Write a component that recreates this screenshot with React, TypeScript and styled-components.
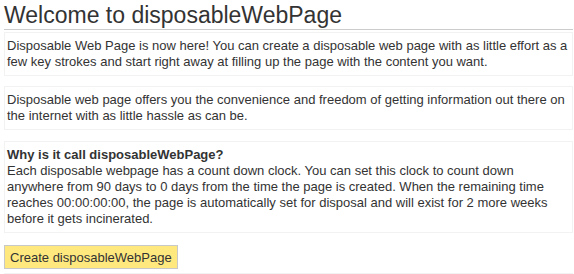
import React from "react";
import styled, { createGlobalStyle } from "styled-components";

const GlobalStyle = createGlobalStyle`
  body {
    margin: 0;
    background: #ffffff;
    font-family: "Liberation Sans", Arial, sans-serif;
    color: #333333;
  }
`;

const Page = styled.div`
  width: 569px;
  padding-left: 4px;
`;

const Title = styled.h1`
  margin: 0;
  padding-top: 1px;
  font-size: 23px;
  font-weight: 400;
  line-height: 28px;
  color: #333333;
  border-bottom: 1px solid #cccccc;
`;

const Section = styled.div<{ $gap?: number }>`
  margin-top: ${(p) => p.$gap ?? 10}px;
  border: 1px solid #f2f2f2;
  padding: 5px 2px;
  font-size: 13px;
  line-height: 16px;
`;

const Text = styled.p`
  margin: 0;
`;

const SubTitle = styled.h3`
  margin: 0;
  font-size: 13px;
  line-height: 16px;
  font-weight: 700;
`;

const CreateBtn = styled.button`
  display: block;
  margin-top: 12px;
  height: 24px;
  padding: 0 5px;
  border: 1px solid #c8c8c8;
  background: #ffe97f;
  font-family: "Liberation Sans", Arial, sans-serif;
  font-size: 13px;
  color: #333333;
  cursor: pointer;
`;

const App = () => {
  return (
    <>
      <GlobalStyle />
      <Page>
        <Title>Welcome to disposableWebPage</Title>
        <Section $gap={2}>
          <Text>
            Disposable Web Page is now here! You can create a disposable web page with as little effort as a
            few key strokes and start right away at filling up the page with the content you want.
          </Text>
        </Section>
        <Section $gap={10}>
          <Text>
            Disposable web page offers you the convenience and freedom of getting information out there on
            the internet with as little hassle as can be.
          </Text>
        </Section>
        <Section $gap={11}>
          <SubTitle>Why is it call disposableWebPage?</SubTitle>
          <Text>
            Each disposable webpage has a count down clock. You can set this clock to count down
            anywhere from 90 days to 0 days from the time the page is created. When the remaining time
            reaches 00:00:00:00, the page is automatically set for disposal and will exist for 2 more weeks
            before it gets incinerated.
          </Text>
        </Section>
        <CreateBtn>Create disposableWebPage</CreateBtn>
        <Section $gap={4}>
          <Text>&nbsp;</Text>
        </Section>
      </Page>
    </>
  );
};

export default App;
